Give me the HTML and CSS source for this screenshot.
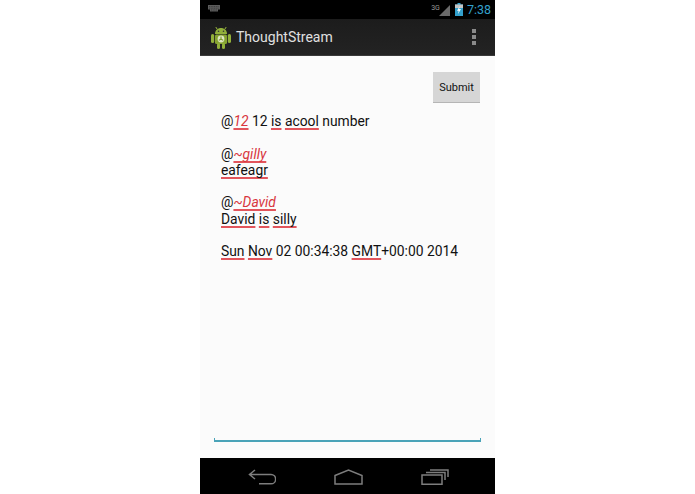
FILE: index.html
```html
<!DOCTYPE html>
<html lang="en">
<head>
<meta charset="utf-8">
<title>ThoughtStream</title>
<link rel="stylesheet" href="styles.css">
</head>
<body>
<div class="phone">
  <div class="status">
    <svg class="kbd" width="12" height="7" viewBox="0 0 12 7"><path d="M0 0h12v4.500h-2v2H2v-2H0z" fill="#5c5c5c"/><path d="M1 1.500h10M1 3.200h10M3 5h6" stroke="#2a2a2a" stroke-width=".6" stroke-dasharray="1 .7"/></svg>
    <div class="status-right">
      <span class="net">3G</span>
      <svg class="signal" width="11" height="11" viewBox="0 0 13 13"><path d="M13 0v13H0z" fill="#6a6a6a"/></svg>
      <svg class="batt" width="8" height="13" viewBox="0 0 8 13"><path d="M2.500 0h3v1.500H8V13H0V1.500h2.500z" fill="#33a0cc"/><path d="M0 1.500h8V5H0z" fill="#c4c4c4"/><path d="M4.800 3 2 7.800h1.700L3 11l3-5H4.200z" fill="#fff"/></svg>
      <span class="time">7:38</span>
    </div>
  </div>
  <div class="actionbar">
    <svg class="logo" width="20" height="23" viewBox="0 0 20 23">
      <path d="M6 3 4.800 1M14 3l1.200-2" stroke="#92b03a" stroke-width="1"/>
      <path d="M4 8c0-4 3-6 6-6s6 2 6 6z" fill="#92b03a"/>
      <circle cx="7.500" cy="5.200" r=".8" fill="#333"/><circle cx="12.500" cy="5.200" r=".8" fill="#333"/>
      <rect x="4" y="8.500" width="12" height="9.500" rx="1.500" fill="#86a331"/>
      <rect x="0" y="8" width="3.200" height="9" rx="1.600" fill="#92b03a"/>
      <rect x="16.800" y="8" width="3.200" height="9" rx="1.600" fill="#92b03a"/>
      <rect x="6" y="17" width="3" height="6" rx="1.500" fill="#92b03a"/>
      <rect x="11" y="17" width="3" height="6" rx="1.500" fill="#92b03a"/>
      <circle cx="10" cy="13" r="3.400" fill="#dfe6c4"/>
      <path d="M10 13V10.500M10 13l-2.200 1.400M10 13l2.200 1.400" stroke="#7d9a2a" stroke-width="1.100"/>
    </svg>
    <span class="app-title">ThoughtStream</span>
    <div class="overflow"><i></i><i></i><i></i></div>
  </div>
  <main class="content">
    <div class="submit-row"><button class="submit">Submit</button></div>
    <div class="feed">
      <p class="post">@<em class="err">12</em> 12 <span class="err">is</span> <span class="err">acool</span> number</p>
      <p class="post">@<em class="err">~gilly</em><br><span class="err">eafeagr</span></p>
      <p class="post">@<em class="err">~David</em><br><span class="err">David</span> <span class="err">is</span> <span class="err">silly</span></p>
      <p class="post"><span class="err">Sun</span> <span class="err">Nov</span> 02 00:34:38 <span class="err">GMT</span>+00:00 2014</p>
    </div>
    <div class="input-line"></div>
  </main>
  <nav class="navbar">
    <svg width="28" height="16" viewBox="0 0 28 16" fill="none" stroke="#7d7d7d" stroke-width="1.500"><path d="M7 1 1.500 5.500 7 10M1.500 5.500H23a3.500 3.500 0 0 1 0 9.300H11"/></svg>
    <svg width="29" height="16" viewBox="0 0 29 16" fill="none" stroke="#7d7d7d" stroke-width="1.500"><path d="M1 6.500 14.500 1 28 6.500V15H1z"/></svg>
    <svg width="28" height="16" viewBox="0 0 28 16" fill="none" stroke="#7d7d7d" stroke-width="1.500"><path d="M1 6h20v9.300H1zM5 3.500h19V11M9 1h18v7"/></svg>
  </nav>
</div>
</body>
</html>
```
FILE: styles.css
```css
* { box-sizing: border-box; }
html, body { margin: 0; height: 100%; background: #fff; }
body { font-family: Roboto, sans-serif; overflow: hidden; }
.phone {
  width: 295px;
  height: 494px;
  margin: 0 auto;
  display: flex;
  flex-direction: column;
}
.status {
  height: 19px;
  background: #000;
  display: flex;
  align-items: center;
  justify-content: space-between;
  padding: 0 4px 0 8px;
}
.kbd { margin-top: -3px; }
.status-right { display: flex; align-items: center; gap: 2px; }
.net { font-size: 7px; color: #999; align-self: flex-start; margin: 2px -3px 0 0; }
.signal { margin-top: 1px; }
.batt { margin-left: 3px; }
.time { font-size: 12.500px; color: #33a0cc; margin-left: 2px; }
.actionbar {
  height: 37px;
  background: linear-gradient(#1c1c1c, #232323);
  border-bottom: 1px solid #3a3a3a;
  display: flex;
  align-items: center;
  padding: 0 19px 0 11px;
}
.app-title { color: #e0e0e0; font-size: 14px; margin-left: 5px; flex: 1; }
.overflow { display: flex; flex-direction: column; gap: 2px; }
.overflow i { display: block; width: 4px; height: 4px; background: #8a8a8a; }
.content {
  flex: 1;
  background: #fbfbfb;
  display: flex;
  flex-direction: column;
  padding: 16px 14px 16px;
}
.submit-row { display: flex; justify-content: flex-end; padding-right: 1px; }
.submit {
  width: 47px;
  height: 31px;
  padding: 1px 0 0;
  border: 0;
  border-bottom: 1px solid #b5b5b5;
  background: #d6d6d6;
  color: #111;
  font: 11px Roboto, sans-serif;
}
.feed { flex: 1; padding: 10px 0 0 7px; }
.post {
  margin: 0 0 16.250px;
  font-size: 13.850px;
  line-height: 16.250px;
  color: #111;
  white-space: nowrap;
}
.err {
  text-decoration: underline #e2555c 1.500px;
  text-underline-offset: 2px;
  text-decoration-skip-ink: none;
}
em.err { color: #d8363e; }
.input-line {
  height: 4px;
  border: 1px solid #4aa3b8;
  border-top: 0;
  border-bottom-width: 2px;
}
.navbar {
  height: 36px;
  background: #000;
  display: flex;
  align-items: center;
  justify-content: space-between;
  padding: 2px 46px 0 48px;
}
```
